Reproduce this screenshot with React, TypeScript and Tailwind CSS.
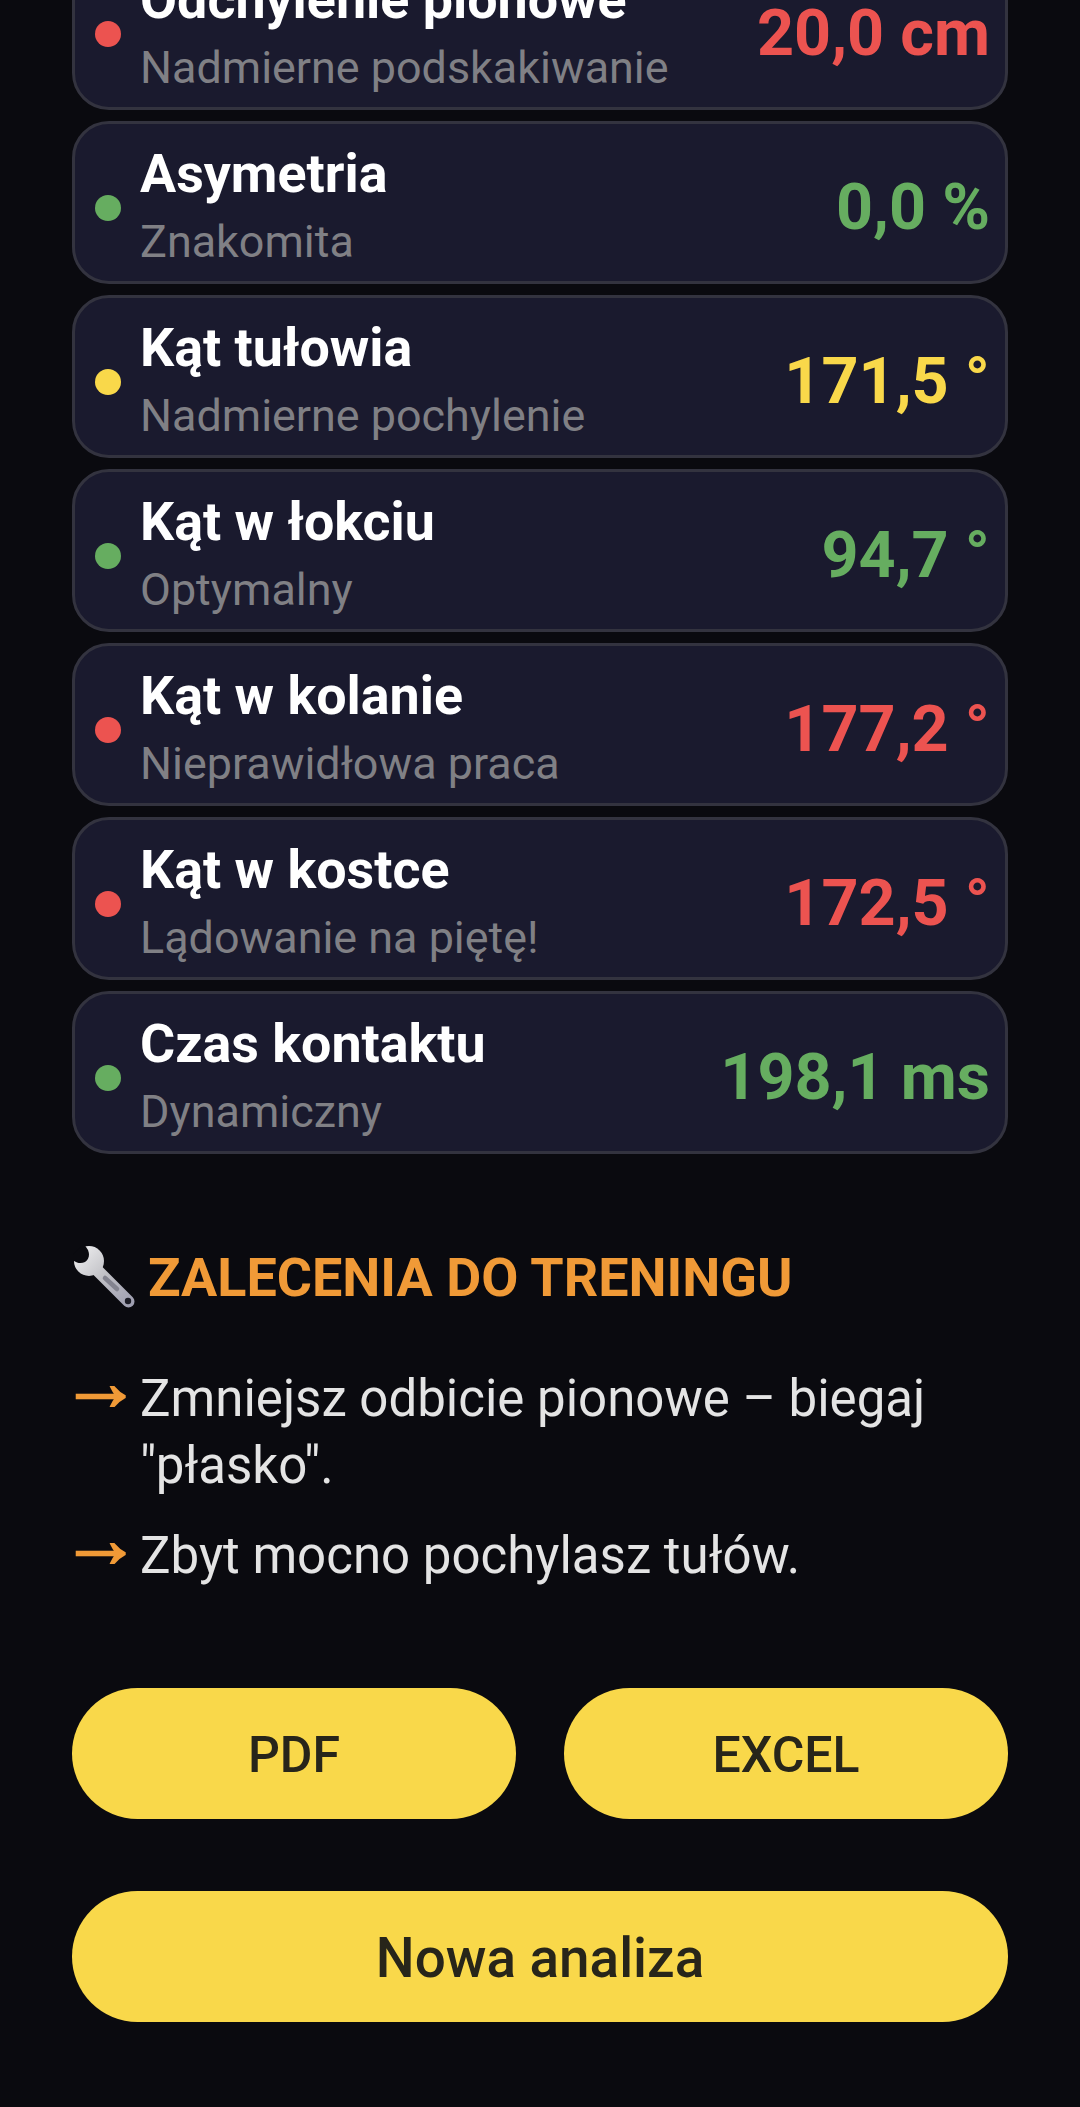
const font = { fontFamily: 'Roboto, sans-serif' };

type Row = { title: string; sub: string; value: string; tone: 'red' | 'green' | 'yellow' };

const rows: Row[] = [
  { title: 'Odchylenie pionowe', sub: 'Nadmierne podskakiwanie', value: '20,0 cm', tone: 'red' },
  { title: 'Asymetria', sub: 'Znakomita', value: '0,0 %', tone: 'green' },
  { title: 'Kąt tułowia', sub: 'Nadmierne pochylenie', value: '171,5 °', tone: 'yellow' },
  { title: 'Kąt w łokciu', sub: 'Optymalny', value: '94,7 °', tone: 'green' },
  { title: 'Kąt w kolanie', sub: 'Nieprawidłowa praca', value: '177,2 °', tone: 'red' },
  { title: 'Kąt w kostce', sub: 'Lądowanie na piętę!', value: '172,5 °', tone: 'red' },
  { title: 'Czas kontaktu', sub: 'Dynamiczny', value: '198,1 ms', tone: 'green' },
];

const dot = { red: 'bg-[#ec5350]', green: 'bg-[#66ad60]', yellow: 'bg-[#f9d84a]' };
const text = { red: 'text-[#ec5350]', green: 'text-[#66ad60]', yellow: 'text-[#f9d84a]' };

function Wrench() {
  return (
    <svg width="62" height="62" viewBox="0 0 62 62" className="ml-[1px] shrink-0">
      <defs>
        <linearGradient id="w" gradientUnits="userSpaceOnUse" x1="0" y1="0" x2="62" y2="62">
          <stop offset="0" stopColor="#f4f4f5" />
          <stop offset="0.5" stopColor="#bfbfc4" />
          <stop offset="1" stopColor="#9a9aae" />
        </linearGradient>
      </defs>
      <line x1="16" y1="16" x2="55.5" y2="55.5" stroke="url(#w)" strokeWidth="12" strokeLinecap="round" />
      <circle cx="16" cy="15" r="15" fill="url(#w)" />
      <path d="M-2 10 L1 15 C4 17 8 18 12 16 C16 13 17 9 15 4 L11 -2 Z" fill="#0a0a0f" />
      <line x1="32" y1="32" x2="44" y2="43" stroke="#83838f" strokeWidth="4.5" strokeLinecap="round" />
      <circle cx="55" cy="55" r="3.2" fill="#1c1c26" />
    </svg>
  );
}

function Metric({ row }: { row: Row }) {
  return (
    <div className="flex h-[163px] items-center rounded-[37px] border-[3px] border-[#33333f] bg-[#1a1a2e] pl-[20px] pr-[15px] pt-[8px]">
      <div className={`h-[26px] w-[26px] translate-y-[1px] shrink-0 rounded-full ${dot[row.tone]}`} />
      <div className="ml-[19px] min-w-0 flex-1 pb-[3px]">
        <div className="text-[53.8px] font-bold leading-[59px] text-white">{row.title}</div>
        <div className="mt-[14px] text-[44.9px] leading-[49px] text-[#808085]">{row.sub}</div>
      </div>
      <div className={`text-[64.7px] font-bold leading-[74px] ${text[row.tone]}`}>{row.value}</div>
    </div>
  );
}

function Tip({ children }: { children: string }) {
  return (
    <div className="flex">
      <span className="-ml-[12px] w-[80px] shrink-0 text-[81px] leading-[35px] text-[#f09a37] [-webkit-text-stroke:2px_#f09a37]">→</span>
      <span className="flex-1 text-[51px] leading-[67px] text-[#e4e4e4]">{children}</span>
    </div>
  );
}

function Pill({ label, size }: { label: string; size: string }) {
  return (
    <button className={`flex h-[131px] w-full items-center justify-center rounded-full bg-[#f9d84a] pt-[3px] font-medium text-[#27251a] ${size}`}>
      {label}
    </button>
  );
}

export default function App() {
  return (
    <div style={font} className="h-[2107px] overflow-hidden bg-[#0a0a0f]">
      <div className="-mt-[53px] px-[72px]">
        <div className="flex flex-col gap-[11px]">
          {rows.map((r) => (
            <Metric key={r.title} row={r} />
          ))}
        </div>
        <div className="mt-[92px] flex items-center gap-[13px]">
          <Wrench />
          <div className="text-[53.9px] font-bold leading-[59px] text-[#f09a37]">ZALECENIA DO TRENINGU</div>
        </div>
        <div className="mt-[57px] flex flex-col gap-[23px]">
          <Tip>Zmniejsz odbicie pionowe – biegaj "płasko".</Tip>
          <Tip>Zbyt mocno pochylasz tułów.</Tip>
        </div>
        <div className="mt-[99px] grid grid-cols-2 gap-[48px]">
          <Pill label="PDF" size="text-[50px]" />
          <Pill label="EXCEL" size="text-[50px]" />
        </div>
        <div className="mt-[72px]">
          <Pill label="Nowa analiza" size="text-[54.8px]" />
        </div>
      </div>
    </div>
  );
}
